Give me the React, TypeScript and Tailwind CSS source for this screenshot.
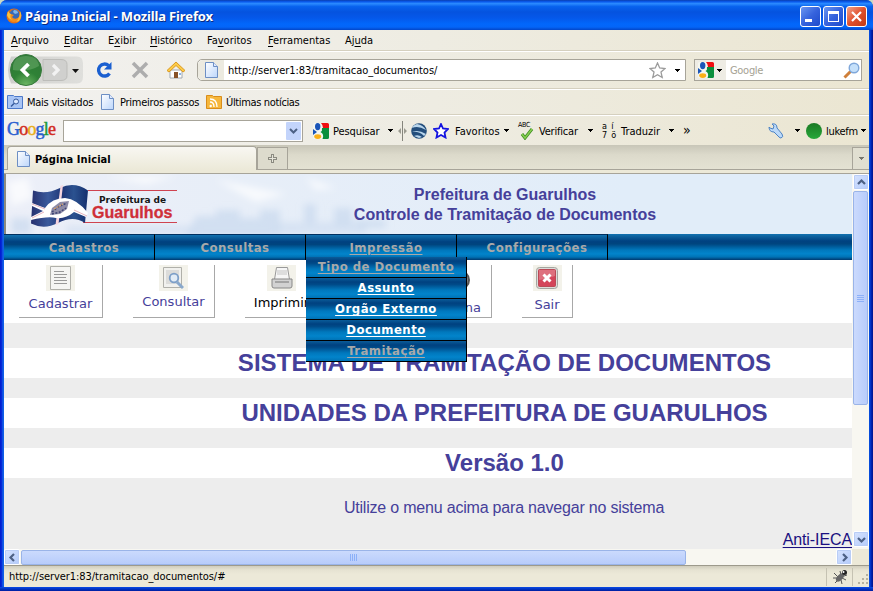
import React from "react";

const tah = "font-['DejaVu_Sans_Condensed','DejaVu_Sans',sans-serif] text-[11px]";

function Tri({ c = "text-black" }: { c?: string }) {
  return (
    <svg className={"h-[3px] w-[5px] shrink-0 " + c} viewBox="0 0 5 3" shapeRendering="crispEdges">
      <path d="M0 0h5v1H0zM1 1h3v1H1zM2 2h1v1H2z" fill="currentColor" />
    </svg>
  );
}

function Page({ className = "" }: { className?: string }) {
  return (
    <svg className={"shrink-0 " + className} width="13" height="16" viewBox="0 0 13 16">
      <defs>
        <linearGradient id="pg" x1="0" y1="0" x2="1" y2="1">
          <stop offset="0" stopColor="#ffffff" />
          <stop offset="1" stopColor="#bcd6fb" />
        </linearGradient>
      </defs>
      <path d="M.5.5h8l4 4v11H.5z" fill="url(#pg)" stroke="#6d8fc4" />
      <path d="M8.500.5v4h4" fill="#dfeaff" stroke="#6d8fc4" />
    </svg>
  );
}

function GIcon() {
  return (
    <svg className="shrink-0" width="16" height="16" viewBox="0 0 16 16">
      <rect width="16" height="16" rx="1.500" fill="#f4f6f0" />
      <path d="M8 0h6.500A1.500 1.500 0 0 1 16 1.500V5h-6Q10 2 8 0z" fill="#f00d10" />
      <path d="M9 5h7v9.500a1.500 1.500 0 0 1-1.500 1.500H9.500q2-5-2-7 2-1 1.500-4z" fill="#0a8f3c" />
      <path d="M0 6l4 3-4 3z" fill="#1a55b8" />
      <ellipse cx="4.700" cy="3.600" rx="2.700" ry="3.600" fill="#1a55b8" />
      <ellipse cx="4.700" cy="13.600" rx="3.500" ry="2.400" fill="#fbb016" />
    </svg>
  );
}

function Menu({ a, u, b, w }: { a?: string; u: string; b: string; w: string }) {
  return (
    <span className={"block whitespace-nowrap pt-[2px] " + w}>
      {a}
      <span className="underline underline-offset-2">{u}</span>
      {b}
    </span>
  );
}

function Arrow({ r, className = "" }: { r: string; className?: string }) {
  return (
    <div className={"flex shrink-0 items-center justify-center rounded-[2px] border border-white bg-gradient-to-br from-[#d6e3fe] to-[#b4cbfb] outline outline-1 -outline-offset-2 outline-[#b9cdf6] " + className}>
      <svg width="9" height="9" viewBox="0 0 9 9" className={r}>
        <path d="M1 6l3.500-3.500L8 6" fill="none" stroke="#4d6185" strokeWidth="2.200" />
      </svg>
    </div>
  );
}

const wave = "bg-[linear-gradient(to_bottom,#1272b0_0%,#0a5c99_12%,#004180_27%,#00457f_38%,#0078bd_62%,#0284cb_76%,#0073b6_88%,#00386e_100%)]";
const dropWave = "bg-[linear-gradient(to_bottom,#0a5c99_0%,#004180_20%,#004a88_32%,#0078bd_60%,#0284cb_80%,#0073b6_100%)]";
const menuFont = "font-['DejaVu_Sans_Condensed','DejaVu_Sans',sans-serif] text-[13px] font-bold tracking-[0.500px] decoration-1 underline-offset-2 ";

function NavItem({ t, u, cls }: { t: string; u?: boolean; cls?: string }) {
  return (
    <div className={"flex h-[26px] w-[151px] shrink-0 items-center justify-center whitespace-nowrap border-r border-t border-r-black border-t-[#003060] " + wave + " " + (cls || "pl-[10px]")}>
      <span className={menuFont + "text-[#a9a9a9] " + (u ? "underline" : "")}>{t}</span>
    </div>
  );
}

function Drop({ t, on }: { t: string; on?: boolean }) {
  return (
    <div className={"flex h-[21px] items-center justify-center whitespace-nowrap border-b border-r border-black " + dropWave}>
      <span className={menuFont + "underline " + (on ? "text-white" : "text-[#a9a9a9]")}>{t}</span>
    </div>
  );
}

function Tool({ t, w, ml, ic, cls, pt }: { t: string; w: string; ml: string; ic: React.ReactNode; cls?: string; pt?: string }) {
  return (
    <div className={"flex h-[53px] shrink-0 flex-col items-center border-b border-r border-[#a8a8a8] " + w + " " + ml}>
      <div className="flex h-[26px] w-[29px] items-center justify-center bg-[#f3f2ea]">{ic}</div>
      <span className={"font-['DejaVu_Sans',sans-serif] text-[13px] leading-[16px] " + (cls || "text-[#45409a]") + " " + (pt || "mt-[2px]")}>{t}</span>
    </div>
  );
}

function Banner() {
  return (
    <svg className="absolute left-0 top-0" width="620" height="60" viewBox="0 0 620 60">
      <defs>
        <filter id="soft" x="-20%" y="-20%" width="140%" height="140%">
          <feGaussianBlur stdDeviation="3.500" />
        </filter>
        <linearGradient id="sky" x1="0" x2="1">
          <stop offset="0" stopColor="#eceff8" />
          <stop offset=".4" stopColor="#e7eef8" />
          <stop offset="1" stopColor="#e1edf9" />
        </linearGradient>
        <linearGradient id="fl" x1="0" x2="1">
          <stop offset="0" stopColor="#26306f" />
          <stop offset=".3" stopColor="#3a5a9c" />
          <stop offset=".55" stopColor="#1f3677" />
          <stop offset=".75" stopColor="#2b5290" />
          <stop offset="1" stopColor="#152f6e" />
        </linearGradient>
      </defs>
      <rect width="620" height="60" fill="url(#sky)" />
      <g filter="url(#soft)">
        <path d="M190 42h20v-6h24v8h20v-8h20v26H180zM5 44h20v16H5zM298 30h12v20h-12zM328 34h18v18h-18zM350 46h30v8h-30z" fill="#c9d9ee" opacity=".7" />
        <path d="M60 52h130v8H60zM270 48h90v12h-90z" fill="#cddcf0" opacity=".6" />
        <path d="M210 6l70 14-30 8zM100 2h70l-30 8zM300 4l30 10-20 2zM2 8l20-4 4 20-20 8z" fill="#fff" opacity=".7" />
      </g>
      <path d="M82 16.500h89M77 48.500h94" stroke="#cf4350" strokeWidth="1.200" />
      <path d="M27 16.500Q40 21 54 14Q68 7 82 16.500L79 49Q67 41 52 49Q38 56 25 49.500Z" fill="url(#fl)" />
      <path d="M54.500 12l2.500-1-4.500 39-3 1z" fill="#f6d5de" />
      <path d="M26 29L39 34Q46 24 59 24Q71 25 82 39L80 43L68 38Q60 45 50 44Q42 42 25 46V43L37 37L26 32Z" fill="#fff" />
      <path d="M26 30l13 5M68 36l13 6M38 38l-12 6" stroke="#e0a0ac" strokeWidth=".8" />
      <path d="M44 41l2-7 8-6 9-1-2 8-7 5z" fill="#8d8ba6" />
      <path d="M46 38l6-5 9-4M46 40l8-2 6-4" stroke="#3d4474" strokeWidth="1.500" fill="none" strokeDasharray="2 1.500" />
      <path d="M48 35l9-5" stroke="#d9a36a" strokeWidth="1.200" strokeDasharray="2 1" />
    </svg>
  );
}

export default function App() {
  return (
    <div className="h-[591px] w-[873px] overflow-hidden bg-[#c9d9c4]">
      <div className={"flex h-[591px] w-[873px] flex-col rounded-t-[7px] bg-[linear-gradient(to_right,#0019cf_0,#0831d9_2px,#166aee_3px,#0855dd_4px,#0855dd_869px,#0441d8_870px,#0029b8_871px,#00138c_873px)] " + tah}>
        <div className="flex h-[30px] shrink-0 items-center rounded-t-[7px] bg-[linear-gradient(to_bottom,#0b3fb0_0,#0a5cf0_6%,#2b8bff_12%,#0762ee_22%,#0553df_40%,#0558ea_60%,#0267fb_80%,#0465f8_90%,#0346c8_100%)] pl-[6px] pr-[6px]">
          <svg width="16" height="16" viewBox="0 0 16 16" className="mt-[1px] shrink-0">
            <circle cx="8" cy="8" r="7.500" fill="#e0701a" />
            <circle cx="8.500" cy="6.500" r="5" fill="#3569b9" />
            <path d="M8 2q4 0 4 3l-3 1-2-2z" fill="#7fb6e8" />
            <path d="M1 3q1 3 4 3l3 1-2 2q2 3 6 1l2-2q-1 6-7 6Q1 13 1 3z" fill="#f28c1c" />
            <path d="M3 2q-1 3 2 4-2 4 2 6-5-1-6-5z" fill="#fbc33c" />
            <path d="M14 3q3 5-1 10l-3 1q4-4 4-11z" fill="#f9b938" />
          </svg>
          <span className="ml-[3px] mt-[4px] font-['Noto_Sans',sans-serif] text-[13px] font-bold tracking-[-0.140px] text-white [text-shadow:1px_1px_0_#0a2a80]">Página Inicial - Mozilla Firefox</span>
          <div className="ml-auto mt-[3px] flex gap-[2px]">
            <div className="flex h-[21px] w-[21px] items-center justify-center rounded-[3px] border border-white bg-gradient-to-br from-[#6b95f0] via-[#3663dd] to-[#1d4acb]">
              <div className="mr-[4px] mt-[8px] h-[3px] w-[7px] bg-white" />
            </div>
            <div className="flex h-[21px] w-[21px] items-center justify-center rounded-[3px] border border-white bg-gradient-to-br from-[#6b95f0] via-[#3663dd] to-[#1d4acb]">
              <div className="h-[11px] w-[11px] border border-t-[3px] border-white" />
            </div>
            <div className="flex h-[21px] w-[21px] items-center justify-center rounded-[3px] border border-white bg-gradient-to-br from-[#f0a088] via-[#e0502c] to-[#c33a12]">
              <svg width="11" height="11" viewBox="0 0 11 11"><path d="M1 1l9 9M10 1l-9 9" stroke="#fff" strokeWidth="2.200" /></svg>
            </div>
          </div>
        </div>

        <div className="ml-[4px] mr-[4px] flex h-[557px] shrink-0 flex-col bg-[#ece9d8]">
          <div className="h-[115px] shrink-0 bg-gradient-to-r from-[#f2f1ef] via-[#eeece2] to-[#ebe6d2]">
            <div className="flex h-[21px] items-center border-b border-[#d5d0bf] pl-[7px]">
              <Menu u="A" b="rquivo" w="w-[53px]" />
              <Menu u="E" b="ditar" w="w-[44px]" />
              <Menu a="E" u="x" b="ibir" w="w-[42px]" />
              <Menu u="H" b="istórico" w="w-[57px] tracking-[-0.150px]" />
              <Menu a="Fa" u="v" b="oritos" w="w-[61px]" />
              <Menu u="F" b="erramentas" w="w-[77px]" />
              <Menu a="Aj" u="u" b="da" w="w-[40px]" />
            </div>
            <div className="flex h-[38px] items-center border-b border-t border-b-[#d5d0bf] border-t-white pl-[3px] pr-[7px]">
              <svg width="78" height="34" viewBox="0 0 78 34" className="shrink-0">
                <defs>
                  <radialGradient id="grn" cx=".5" cy="1" r=".9">
                    <stop offset="0" stopColor="#6fb865" />
                    <stop offset=".5" stopColor="#2f8236" />
                    <stop offset="1" stopColor="#2f7a36" />
                  </radialGradient>
                  <linearGradient id="gr" x1="0" y1="0" x2="1" y2="0">
                    <stop offset="0" stopColor="#cfcfcd" />
                    <stop offset="1" stopColor="#dfdfdc" />
                  </linearGradient>
                </defs>
                <path d="M4 3.500h66q6 0 6 7v13q0 7-6 7H4q-6-13 0-27z" fill="url(#gr)" />
                <path d="M36 6.500h18q6 0 6 5v11q0 5-6 5H36z" fill="#d0d0ce" stroke="#bdbdba" />
                <path d="M46 12l5 5-5 5" stroke="#f2f2f2" strokeWidth="3.200" fill="none" />
                <circle cx="19" cy="17" r="15.500" fill="url(#grn)" stroke="#397a3e" />
                <path d="M6 13q1-10 13-10t13 10q-10 6-26 4z" fill="#7fbb7c" opacity=".4" />
                <path d="M21.500 11l-6 6 6 6" stroke="#fff" strokeWidth="3.800" fill="none" />
                <path d="M65 16h7l-3.500 4z" fill="#111" />
              </svg>
              <svg width="18" height="20" viewBox="0 0 18 20" className="ml-[10px] shrink-0">
                <path d="M14.500 13.500A6 6 0 1 1 13.500 5.500" stroke="#1a5fd0" strokeWidth="3.400" fill="none" />
                <path d="M16.500 2v7.500H9z" fill="#1a5fd0" />
              </svg>
              <svg width="18" height="18" viewBox="0 0 18 18" className="ml-[18px] shrink-0">
                <path d="M2 2l14 14M16 2L2 16" stroke="#adadad" strokeWidth="3.500" />
              </svg>
              <svg width="20" height="18" viewBox="0 0 20 18" className="ml-[17px] shrink-0">
                <path d="M4 9h12v8H4z" fill="#fff" stroke="#a0a8b0" />
                <path d="M10 1L1 9.500l2 1.500 7-6.500 7 6.500 2-1.500z" fill="#fccb48" stroke="#dc9a20" />
                <path d="M8 11h4v6H8z" fill="#875228" />
                <path d="M13 12h2v2h-2z" fill="#8cb4e0" />
              </svg>
              <div className="ml-[11px] flex h-[22px] w-[489px] items-center rounded-l-[5px] border border-[#a7a499] bg-white">
                <div className="flex h-full w-[26px] shrink-0 items-center justify-center rounded-l-[5px] bg-[#eceae0]"><Page /></div>
                <span className="ml-[4px] pt-[3px] tracking-[-0.030px]">http://server1:83/tramitacao_documentos/</span>
                <svg width="17" height="17" viewBox="0 0 17 17" className="ml-auto shrink-0">
                  <path d="M8.500 1l2.200 5 5.300.5-4 3.600 1.200 5.400-4.700-2.800-4.700 2.800L5 10.100 1 6.500 6.300 6z" fill="#fff" stroke="#9b9b9b" strokeWidth="1.300" />
                </svg>
                <span className="ml-[9px] mr-[5px] flex items-center"><Tri /></span>
              </div>
              <div className="ml-[8px] flex h-[22px] w-[168px] shrink-0 items-center border border-[#a7a499] bg-white">
                <div className="flex h-full w-[31px] shrink-0 items-center gap-[3px] bg-[#eeece4] pl-[3px]"><GIcon /><Tri /></div>
                <span className="ml-[4px] pt-[3px] tracking-[-0.300px] text-[#a5a293]">Google</span>
                <svg width="17" height="17" viewBox="0 0 17 17" className="ml-auto mr-[1px]">
                  <path d="M1.500 15.500l6-6" stroke="#cf7f3a" strokeWidth="3" />
                  <circle cx="11" cy="6" r="4.800" fill="#c5e0fa" stroke="#7fa7da" strokeWidth="1.400" />
                </svg>
              </div>
            </div>
            <div className="flex h-[26px] items-center border-b border-t border-b-[#d5d0bf] border-t-white pl-[3px]">
              <svg width="16" height="14" viewBox="0 0 16 14" className="shrink-0">
                <path d="M.5.5h6l1 1h8v12H.5z" fill="#a9c5f5" stroke="#4d79c9" />
                <circle cx="9" cy="6.500" r="2.500" fill="#dbe8ff" stroke="#35599c" />
                <path d="M7 8.500l-3 3" stroke="#35599c" strokeWidth="1.500" />
              </svg>
              <span className="ml-[4px] w-[74px] whitespace-nowrap pt-[3px] tracking-[-0.250px]">Mais visitados</span>
              <Page />
              <span className="ml-[6px] w-[86px] whitespace-nowrap pt-[3px] tracking-[-0.250px]">Primeiros passos</span>
              <svg width="16" height="14" viewBox="0 0 16 14" className="shrink-0">
                <path d="M.5.5h6l1 1h8v12H.5z" fill="#f6b73c" stroke="#d98d1b" />
                <path d="M4 7q4 0 4 5M4 4q7 0 7 8" stroke="#fff" fill="none" strokeWidth="1.300" />
                <circle cx="4.700" cy="11" r="1.200" fill="#fff" />
              </svg>
              <span className="ml-[4px] whitespace-nowrap pt-[3px] tracking-[-0.350px]">Últimas notícias</span>
            </div>
            <div className="flex h-[30px] items-center whitespace-nowrap border-t border-white pl-[3px]">
              <div className="flex w-[54px] shrink-0 pb-[3px] font-['Liberation_Serif',serif] text-[18px] tracking-[-0.800px] [-webkit-text-stroke:0.500px]">
                <span className="text-[#2a5fd0]">G</span><span className="text-[#d22c22]">o</span><span className="text-[#e8ad18]">o</span><span className="text-[#2a5fd0]">g</span><span className="text-[#1f9a3c]">l</span><span className="text-[#d22c22]">e</span>
              </div>
              <div className="ml-[2px] flex h-[22px] w-[240px] shrink-0 items-center justify-end border border-[#a7a499] bg-white pr-[1px]">
                <div className="flex h-[18px] w-[15px] items-center justify-center rounded-[1px] bg-[#c3d4fb]">
                  <svg width="9" height="6" viewBox="0 0 9 6"><path d="M1 1l3.500 3.500L8 1" fill="none" stroke="#4d6185" strokeWidth="2" /></svg>
                </div>
              </div>
              <span className="ml-[10px]"><GIcon /></span>
              <span className="ml-[4px] w-[55px] shrink-0 pt-[3px] tracking-[-0.100px]">Pesquisar</span><Tri />
              <svg width="10" height="20" viewBox="0 0 10 20" className="ml-[5px] shrink-0">
                <path d="M4.500 0v20" stroke="#85857d" />
                <path d="M0 10l3-3v6zM9 10l-3-3v6z" fill="#9a9a90" />
              </svg>
              <svg width="16" height="16" viewBox="0 0 16 16" className="ml-[3px] shrink-0">
                <circle cx="8" cy="8" r="7.800" fill="#234e7c" />
                <path d="M1 5q6-3 14 2Q12 2 6 1 2 2 1 5zM1 9q6-3 14 2l-2 2Q8 8 1 9zM3 13q4-2 8 1l-3 1z" fill="#b9d6ec" />
              </svg>
              <svg width="16" height="16" viewBox="0 0 16 16" className="ml-[6px] shrink-0">
                <path d="M8 1l2 4.500 5 .5-3.500 3.500 1 5L8 12l-4.500 2.500 1-5L1 6l5-.5z" fill="#fff" stroke="#1414e0" strokeWidth="1.800" />
              </svg>
              <span className="ml-[6px] w-[49px] shrink-0 pt-[3px]">Favoritos</span><Tri />
              <div className="ml-[9px] flex w-[18px] shrink-0 flex-col items-start">
                <span className="text-[7px] leading-[6px] tracking-[-0.200px]">ABC</span>
                <svg width="16" height="12" viewBox="0 0 16 12"><path d="M4 6l3 4L14 1" fill="none" stroke="#3c8c20" strokeWidth="3" /><path d="M4 6l3 4L14 1" fill="none" stroke="#86cf50" strokeWidth="1.500" /></svg>
              </div>
              <span className="ml-[3px] w-[49px] shrink-0 pt-[3px] tracking-[-0.200px]">Verificar</span><Tri />
              <div className="ml-[9px] flex w-[16px] shrink-0 gap-[4px] text-[9px] leading-[9px]">
                <div className="flex flex-col"><span>a</span><span>7</span></div>
                <div className="flex flex-col"><span>í</span><span>ö</span></div>
              </div>
              <span className="ml-[3px] w-[48px] shrink-0 pt-[3px]">Traduzir</span><Tri />
              <span className="ml-[9px] pb-[1px] text-[14px]">»</span>
              <svg width="16" height="16" viewBox="0 0 16 16" className="ml-auto shrink-0">
                <path d="M2 5l3 1 1-3-2-2q5-1 5 4l5 6q2 3-1 4-1 0-2-1L6 9Q1 9 1 4z" fill="#bcd9f8" stroke="#4d83c4" strokeWidth="1" />
              </svg>
              <span className="ml-[11px] flex items-center"><Tri /></span>
              <div className="ml-[6px] h-[16px] w-[16px] shrink-0 rounded-full bg-gradient-to-b from-[#1b7a24] to-[#27a83a]" />
              <span className="ml-[4px] w-[35px] shrink-0 pt-[3px] tracking-[-0.300px]">lukefm</span>
              <span className="mr-[3px] flex items-center"><Tri /></span>
            </div>
          </div>

          <div className="flex h-[29px] shrink-0 items-end border-b border-[#a7a499] bg-[linear-gradient(to_bottom,#c8c6b8_0,#dcdacb_35%,#e4e2d3_85%)] pb-0">
            <div className="flex h-[28px] w-full flex-col">
              <div className="flex h-[25px] items-end border-b border-[#a7a499] pl-[3px]">
                <div className="-mb-[1px] flex h-[24px] w-[250px] items-center rounded-t-[4px] border border-b-0 border-[#a7a499] bg-gradient-to-b from-[#f8f7f2] to-[#ece9d8] pl-[9px]">
                  <Page className="mt-[1px]" />
                  <span className="ml-[5px] pt-[3px] font-bold tracking-[0.080px]">Página Inicial</span>
                </div>
                <div className="flex h-[22px] w-[31px] items-center justify-center border border-b-0 border-[#a7a499] bg-[#dddbcd]">
                  <svg width="9" height="9" viewBox="0 0 9 9"><path d="M4.500 0v9M0 4.500h9" stroke="#8b8a80" strokeWidth="3" /><path d="M4.500 1v7M1 4.500h7" stroke="#e6e5da" /></svg>
                </div>
                <div className="ml-auto flex h-[22px] w-[17px] items-center justify-center border-l border-t border-[#a7a499] bg-[#e1dfd1]"><Tri c="text-[#77766c]" /></div>
              </div>
              <div className="h-[3px] bg-[#ece9d8]" />
            </div>
          </div>

          <div className="flex h-[375px] shrink-0">
            <div className="w-[848px] shrink-0 overflow-hidden bg-[#ededed]">
              <div className="relative h-[60px] w-[848px] border-l-2 border-[#8b8a80] bg-[#e1edf9] text-[#45409a]">
                <Banner />
                <div className="absolute left-[93px] top-[21px] font-['DejaVu_Sans',sans-serif] text-[9px] font-bold leading-[10px] text-[#161616]">Prefeitura de</div>
                <div className="absolute left-[86px] top-[30px] font-['Liberation_Sans',sans-serif] text-[16px] font-bold leading-[18px] tracking-[0.050px] text-[#cf2f38] [-webkit-text-stroke:0.300px_#cf2f38]">Guarulhos</div>
                <div className="absolute -left-[1px] top-[11px] w-[1000px] text-center font-['Liberation_Sans',sans-serif] text-[16px] font-bold leading-[20px]">
                  <div>Prefeitura de Guarulhos</div>
                  <div>Controle de Tramitação de Documentos</div>
                </div>
              </div>
              <div className={"relative flex h-[26px] " + wave}>
                <NavItem t="Cadastros" />
                <NavItem t="Consultas" />
                <NavItem t="Impressão" u />
                <NavItem t="Configurações" />
                <div className="absolute left-[302px] top-[23px] z-10 w-[161px]">
                  <Drop t="Tipo de Documento" />
                  <Drop t="Assunto" on />
                  <Drop t="Orgão Externo" on />
                  <Drop t="Documento" on />
                  <Drop t="Tramitação" />
                </div>
              </div>
              <div className="flex h-[63px] bg-white pt-[5px]">
                <Tool t="Cadastrar" w="w-[84px]" ml="ml-[15px]" pt="mt-[5px]" ic={
                  <svg width="21" height="24" viewBox="0 0 21 24"><path d="M.5.5h20v23H.5z" fill="#f5f5f3" stroke="#b0b0aa" /><path d="M4 5.500h10M4 8.500h13M4 11.500h12M4 14.500h13M4 17.500h13" stroke="#999" /></svg>} />
                <Tool t="Consultar" w="w-[82px]" ml="ml-[30px]" pt="mt-[3px]" ic={
                  <svg width="21" height="24" viewBox="0 0 21 24"><path d="M.5 1.500h18v20H.5z" fill="#f1f1ee" stroke="#b0b0aa" /><path d="M3 4h13v14H3z" fill="#dcdcda" /><circle cx="11" cy="12" r="4.300" fill="#e2ecf6" stroke="#7d9fc8" strokeWidth="1.800" /><path d="M14 16l6 6" stroke="#89a8cc" strokeWidth="3" /></svg>} />
                <Tool t="Imprimir" w="w-[74px]" ml="ml-[30px]" pt="mt-[4px]" cls="text-black" ic={
                  <svg width="22" height="24" viewBox="0 0 22 24"><path d="M5.500 1.500h11l2 12h-15z" fill="#f6f6f6" stroke="#999" /><path d="M6 4h10v5H6z" fill="#ddd" /><path d="M1 13h20v7q0 2-2 2H3q-2 0-2-2z" fill="#d2d2d2" stroke="#888" /><path d="M4 16h14" stroke="#777" /></svg>} />
                <Tool t="Página" w="w-[82px]" ml="ml-[91px]" pt="mt-[9px]" cls="self-end pr-[10px] text-[#45409a]" ic={
                  <svg width="24" height="24" viewBox="0 0 24 24" className="-mr-[16px]"><circle cx="13" cy="14" r="9" fill="#8a8a8a" stroke="#555" strokeWidth="2" /></svg>} />
                <Tool t="Sair" w="w-[51px]" ml="ml-[30px]" pt="mt-[6px]" ic={
                  <svg width="22" height="22" viewBox="0 0 22 22"><rect x=".5" y=".5" width="21" height="21" rx="3" fill="#dcdcda" stroke="#a5a5a0" /><rect x="2.500" y="2.500" width="17" height="17" rx="1" fill="#d4455a" stroke="#bb4a56" /><path d="M3 3h16v6q-8 3-16 4z" fill="#e58d96" opacity=".6" /><path d="M7.500 7.500l7 7M14.500 7.500l-7 7" stroke="#fff" strokeWidth="3" /></svg>} />
              </div>
              <div className="w-[1001px] pt-[25px] text-center font-['Liberation_Sans',sans-serif] text-[#45409a]">
                <div className="h-[30px] bg-white text-[24px] font-bold leading-[30px] tracking-[0.050px]">SISTEMA DE TRAMITAÇÃO DE DOCUMENTOS</div>
                <div className="mt-[20px] h-[30px] bg-white text-[24px] font-bold leading-[30px]">UNIDADES DA PREFEITURA DE GUARULHOS</div>
                <div className="mt-[20px] h-[30px] bg-white text-[24px] font-bold leading-[30px]">Versão 1.0</div>
                <div className="-ml-[1px] mt-[20px] text-[16px] leading-[20px] tracking-[-0.200px]">Utilize o menu acima para navegar no sistema</div>
              </div>
              <div className="mt-[12px] text-right font-['Liberation_Sans',sans-serif] text-[16px] leading-[19px] tracking-[-0.100px] text-[#1a1080] underline decoration-1 underline-offset-2">Anti-IECA</div>
            </div>
            <div className="flex w-[17px] flex-col bg-[#f8f7f1] pl-[1px]">
              <Arrow r="" className="h-[16px] w-[16px]" />
              <div className="mt-[1px] flex h-[214px] w-[15px] flex-col items-center justify-center gap-[1px] rounded-[2px] border border-[#9ab4e8] bg-gradient-to-r from-[#cbdafd] to-[#b7ccfb]">
                <i className="h-px w-[7px] bg-[#8cb0f8]" /><i className="h-px w-[7px] bg-[#8cb0f8]" /><i className="h-px w-[7px] bg-[#8cb0f8]" /><i className="h-px w-[7px] bg-[#8cb0f8]" />
              </div>
              <div className="mb-[2px] mt-auto"><Arrow r="rotate-180" className="h-[16px] w-[16px]" /></div>
            </div>
          </div>
          <div className="flex h-[16px] shrink-0 items-center bg-[#f8f7f1]">
            <Arrow r="-rotate-90" className="h-[16px] w-[16px]" />
            <div className="ml-[1px] flex h-[15px] w-[665px] items-center justify-center gap-[1px] rounded-[2px] border border-[#9ab4e8] bg-gradient-to-b from-[#cbdafd] to-[#b7ccfb]">
              <i className="h-[7px] w-px bg-[#8cb0f8]" /><i className="h-[7px] w-px bg-[#8cb0f8]" /><i className="h-[7px] w-px bg-[#8cb0f8]" /><i className="h-[7px] w-px bg-[#8cb0f8]" />
            </div>
            <div className="ml-auto"><Arrow r="rotate-90" className="h-[16px] w-[16px]" /></div>
            <div className="h-full w-[17px] bg-[#ece9d8]" />
          </div>
          <div className="flex h-[22px] shrink-0 items-center border-t border-[#9d9a8c] bg-[linear-gradient(to_bottom,#d0cdbd_0,#e6e3d2_4px,#ece9d8_8px)] pl-[5px]">
            <span className="pt-[2px] tracking-[-0.060px]">http://server1:83/tramitacao_documentos/#</span>
            <div className="ml-auto flex h-[18px] w-[27px] items-center justify-center border-x border-[#c5c2b2]">
              <svg width="16" height="16" viewBox="0 0 16 16">
                <path d="M2 4l4 4M1 9h5M3 14l4-4M8 2l1 4M10 9l4 2M9 11l1 4M12 7l3-1" stroke="#555" />
                <ellipse cx="8" cy="8.500" rx="5" ry="2.700" fill="#666" transform="rotate(-45 8 8.500)" />
                <circle cx="12.500" cy="3.500" r="2.500" fill="#222" />
                <circle cx="11.500" cy="3" r="1" fill="#fff" />
              </svg>
            </div>
            <svg width="16" height="18" viewBox="0 0 16 18"><path d="M13 6h2v2h-2zM9 10h2v2H9zM13 10h2v2h-2zM5 14h2v2H5zM9 14h2v2H9zM13 14h2v2h-2z" fill="#b5b2a0" /></svg>
          </div>
        </div>
        <div className="h-[4px] shrink-0 bg-gradient-to-b from-[#0a4be6] to-[#001ca0]" />
      </div>
    </div>
  );
}
